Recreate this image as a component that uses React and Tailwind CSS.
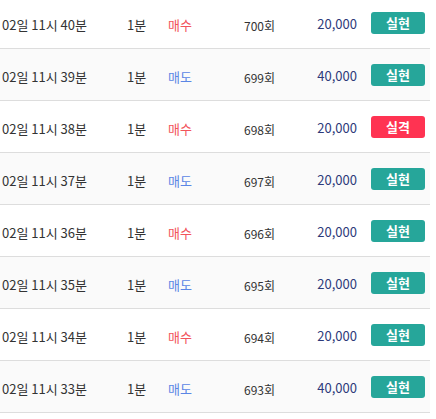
import React from "react";

const rows = [
  ["02일 11시 40분", "매수", "700회", "20,000", "실현"],
  ["02일 11시 39분", "매도", "699회", "40,000", "실현"],
  ["02일 11시 38분", "매수", "698회", "20,000", "실격"],
  ["02일 11시 37분", "매도", "697회", "20,000", "실현"],
  ["02일 11시 36분", "매수", "696회", "20,000", "실현"],
  ["02일 11시 35분", "매도", "695회", "20,000", "실현"],
  ["02일 11시 34분", "매수", "694회", "20,000", "실현"],
  ["02일 11시 33분", "매도", "693회", "40,000", "실현"],
];

export default function App() {
  return (
    <div
      className="w-[436px] h-[419px] overflow-hidden bg-white"
      style={{ fontFamily: '"Noto Sans CJK KR", "Noto Sans", sans-serif' }}
    >
      <div className="w-[430px] -mt-[3px]">
        {rows.map((r, i) => (
          <div
            key={i}
            className={`flex items-center h-[52px] border-b border-[#dddddd] text-[13px] ${
              i % 2 === 1 ? "bg-[#fafafa]" : "bg-white"
            }`}
          >
            <div className="w-[127px] pl-[2px] pt-[4px] text-[#333333]">{r[0]}</div>
            <div className="w-[41px] pt-[4px] text-[#333333]">1분</div>
            <div
              className={`w-[76px] pt-[4px] ${
                r[1] === "매수" ? "text-[#f2545b]" : "text-[#5b86e5]"
              }`}
            >
              {r[1]}
            </div>
            <div className="w-[50px] pt-[6px] text-[12px] text-[#333333]">{r[2]}</div>
            <div className="w-[63px] pt-[3px] text-right text-[#2e3a7a]">{r[3]}</div>
            <div className="ml-[14px]">
              <div
                className={`w-[54px] h-[22px] rounded-[3px] flex items-center justify-center text-white font-bold text-[13px] ${
                  r[4] === "실격" ? "bg-[#ff3352]" : "bg-[#26a69a]"
                }`}
              >
                {r[4]}
              </div>
            </div>
          </div>
        ))}
      </div>
    </div>
  );
}
